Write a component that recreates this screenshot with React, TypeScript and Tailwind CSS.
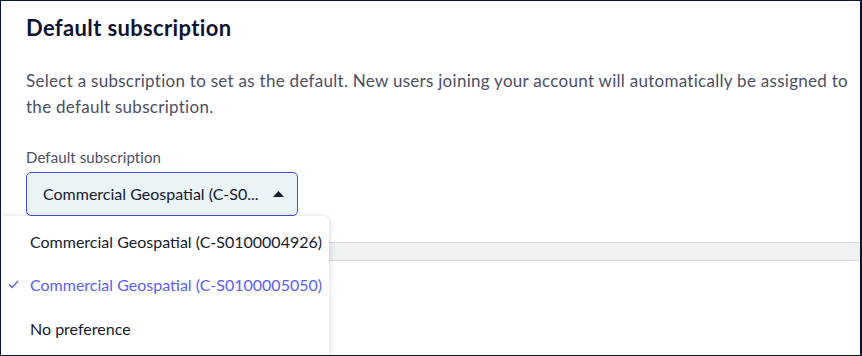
import React from "react";

export default function App() {
  const font = { fontFamily: '"Lato", "Noto Sans", sans-serif' };
  return (
    <div
      className="relative w-[862px] h-[356px] overflow-hidden bg-white border border-[#0b1535] border-r-2"
      style={font}
    >
      <div className="pl-[25px] pt-[13px]">
        <h2 className="text-[22px] leading-[28px] font-bold tracking-[0.35px] text-[#0f1332]">
          Default subscription
        </h2>
        <p className="mt-[26px] text-[17px] leading-[26px] tracking-[0.28px] text-[#4b4f63] pr-[2px]">
          Select a subscription to set as the default. New users joining your account will automatically be assigned to
          the default subscription.
        </p>
        <div className="mt-[27px] text-[15px] leading-[20px] tracking-[0.1px] text-[#4b4f63]">Default subscription</div>
        <button className="mt-[5px] flex items-center justify-between w-[272px] h-[44px] rounded-[5px] border border-[#4250e6] bg-[#eaf3f5] pl-[16px] pr-[13px] text-[16px] text-[#161a2e]">
          <span>Commercial Geospatial (C-S0...</span>
          <svg width="11" height="6" viewBox="0 0 11 6" className="ml-2">
            <path d="M0 6 L5.5 0 L11 6 Z" fill="#161a2e" />
          </svg>
        </button>
      </div>
      <div className="mt-[26px] -ml-px h-[19px] bg-[#eff0f2] border-y border-[#d9dbe0]" />
      <div className="absolute left-0 top-[215px] w-[328px] h-[160px] bg-white rounded-tr-[5px] shadow-[0_1px_6px_rgba(0,0,0,0.18)] pt-[4px]">
        <div className="h-[43px] flex items-center pl-[29px] text-[16px] text-[#161a2e]">
          Commercial Geospatial (C-S0100004926)
        </div>
        <div className="h-[43px] flex items-center pl-[29px] text-[16px] text-[#5a5ef2] relative">
          <svg width="11" height="9" viewBox="0 0 11 9" className="absolute left-[7px] top-[17px]">
            <path d="M1 4.5 L4 7.5 L10 1" stroke="#5a5ef2" strokeWidth="1.4" fill="none" />
          </svg>
          Commercial Geospatial (C-S0100005050)
        </div>
        <div className="h-[45px] flex items-center pl-[29px] text-[16px] text-[#161a2e]">
          No preference
        </div>
      </div>
    </div>
  );
}
